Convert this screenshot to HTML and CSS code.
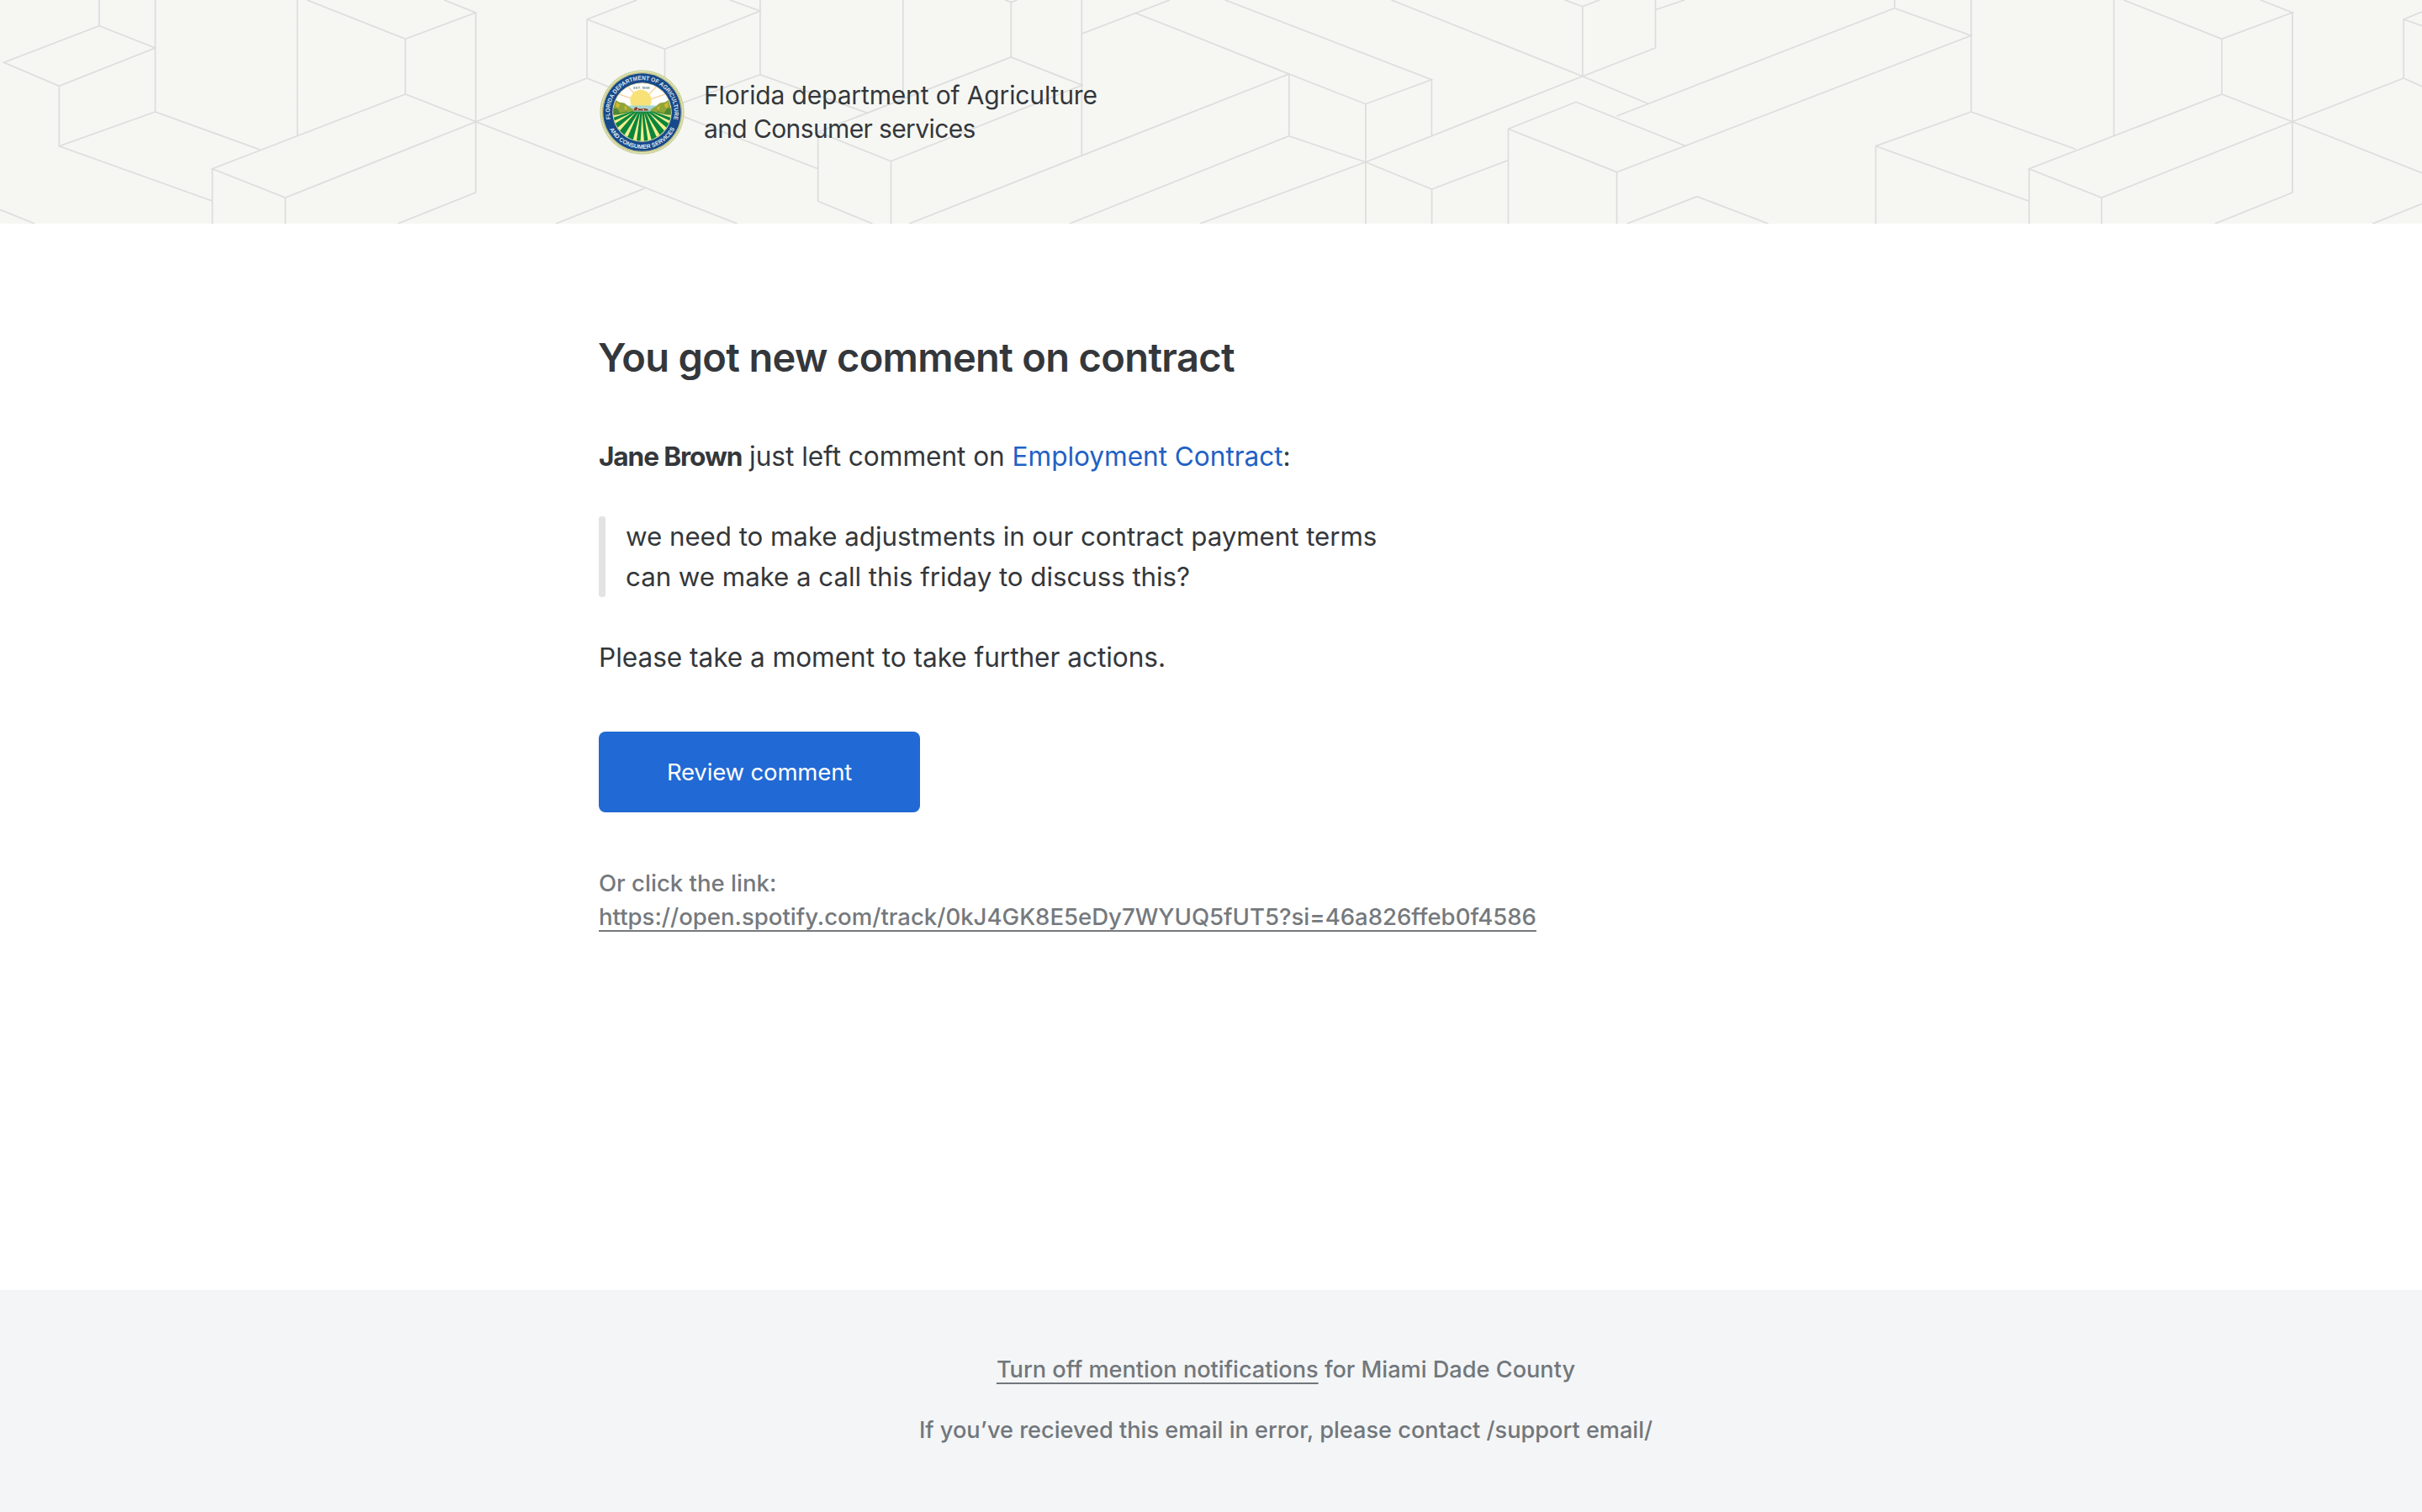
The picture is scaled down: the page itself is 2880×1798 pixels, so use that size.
FILE: index.html
```html
<!DOCTYPE html>
<html lang="en">
<head>
<meta charset="utf-8">
<title>You got new comment on contract</title>
<link rel="stylesheet" href="styles.css">
</head>
<body>
<header class="header">
  <svg class="pattern" viewBox="0 0 2880 266" aria-hidden="true">
    <path d="M118 0V30.7L184.6 57L70.3 102.3L4.6 74.3L118 30.7M184.6 0V133L70.3 173.7V102.3M70.3 173.7L252.5 239M184.6 133L308.6 177.7M353.6 0V161.3M365 0L482 46.3L565.7 15L528 0M482 46.3V112L566 144.7L339.3 235L252.5 200.7L482 112M252.5 200.7V266M339.3 235V266M565.7 15V229L473 266M0 249.3L41.3 266M566 144.7L698 93V23L757.4 0M566 144.7L876.8 266M661 266L766.6 224"/>
    <path d="M698 23L790.5 58.3L903.9 13L867.6 0M790.5 58.3V130L903.9 88.7V0M698 93L790.5 130L972.7 200.7M903.9 88.7L1030.6 134M1073.8 0V117.8M972.7 157L1202.3 68L1286.8 101.3L1059.5 191.7L972.7 157V239.3L1037.5 266M1059.5 191.7V266M1202.3 68V2.7L1195 0M1202.3 2.7L1209.5 0M1286.3 0V184M1286.8 40L1391 0"/>
    <path d="M1349.7 15.3L1400 35L1532.8 88L1623.9 123.7L1702.4 94.7L1456.7 0M1702.4 94.7V161.3M1081 266L1532.8 88V161.7L1271.7 266M1532.8 161.7L1623.9 192.7L1702.6 225V266M1623.9 123.7V266M1426.7 266L1623.9 192.7L1881.8 90.7L1968.5 57V0M1654.5 0L1881.8 90.7L1959.8 123.3M1860.5 0L1881.8 7.7L1902 0M1881.8 7.7V90.7M1969.5 11.3L2003.4 0M1702.6 225L1793 190.7M1793.5 266V153.3L1874 121.3L2004.9 173.7M1793.5 153.3L1922.5 204.7V266M1922.5 204.7L2160 113.3L2343.9 42.3L2252.8 9.7V0M1922.5 138L2120 61.3L2252.8 9.7M1934.6 266L2018 233.7L2102.8 266"/>
    <path d="M2343.9 0V133L2230.5 173.7V266M2230.5 173.7L2412.3 239M2343.9 133L2468 177.3M2513.6 0V161.3M2525.2 0L2642 46.3L2725.9 15L2688 0M2642 46.3V112L2725.9 144.7L2499 235L2412.8 200.7L2642 112M2412.8 200.7V266M2499 235V266M2725.9 15V229L2633.8 266M2725.9 144.7L2858.2 93V23L2880 14M2858.2 23L2880 30.7M2858.2 93L2880 102.7M2725.9 144.7L2880 205.7M2821.3 266L2880 242.3"/>
  </svg>
  <div class="brand">
    <svg class="seal" viewBox="0 0 100 100" role="img" aria-label="Department seal">
      <defs>
        <path id="arc-top" d="M14.3 63A38 38 0 1 1 85.7 63"/>
        <path id="arc-bottom" d="M9.600 64.700A43 43 0 0 0 90.400 64.700"/>
        <clipPath id="scene"><circle cx="50" cy="50" r="34"/></clipPath>
      </defs>
      <circle cx="50" cy="50" r="49.6" fill="#e3e4b4"/>
      <circle cx="50" cy="50" r="49" fill="none" stroke="#a9b885" stroke-width="1" stroke-dasharray="1 .8"/>
      <circle cx="50" cy="50" r="46.6" fill="none" stroke="#b9b878" stroke-width="1"/>
      <circle cx="50" cy="50" r="45.8" fill="#17498a"/>
      <circle cx="50" cy="50" r="34.9" fill="#e9e3b0"/>
      <g clip-path="url(#scene)">
        <path fill="#fff" d="M10 10h80v40H10z"/>
        <g stroke="#f8cf9a" stroke-width="1.3">
          <path d="M50 38L18 27M50 38L28 14M50 38L72 14M50 38L82 27"/>
        </g>
        <circle cx="48.500" cy="36" r="12.500" fill="#f8e277"/>
        <path fill="#a6d6d2" d="M32 42h34v7H32z"/>
        <path fill="#8fa53a" d="M12 34l6 1 5 3 6 1 5 4 6 4v6H12zM88 34l-6 1-5 3-6 1-5 4-6 4v6h28z"/>
        <path fill="#d8b62f" d="M20 38l4 3-2 4-3-2zM29 42l4 3-3 3zM80 38l-4 3 2 4 3-2zM71 42l-4 3 3 3z"/>
        <path fill="#4e8735" d="M14 44l7 2 3 5 8-2 3 4H14zM86 44l-7 2-3 5-8-2-3 4h21z"/>
        <path fill="#0b853d" d="M10 56L38 49H62L90 56V90H10z"/>
        <g fill="#f4ee8e">
          <path d="M36 49.5L13 55v2.500zM40 49.500L15 61l2 3zM43 49.500L20 69l3.500 3zM46 49.500L29 77l4 2zM48 49.500L39 84h4.500zM50 49.500L48 86h4.500zM52 49.500L57 84h4.500zM54 49.500L67 79l4-2zM57 49.500L76.500 72l3.500-3zM60 49.500L83 64l2-3zM64 49.500L87 57.500V55z"/>
        </g>
        <path fill="#8f3d24" d="M40 48l1-3 2-1.500 2 2 4 .5 4-.5 3 .5 2 2z"/>
        <path fill="#fff" d="M44 46.500h1.500v1H44zM51 46.500h1.500v1H51z"/>
      </g>
      <text class="seal-est" x="49.500" y="22.500" text-anchor="middle">EST. 1868</text>
      <text class="seal-text" textLength="136" lengthAdjust="spacingAndGlyphs"><textPath href="#arc-top" startOffset="5" textLength="136" lengthAdjust="spacingAndGlyphs">FLORIDA DEPARTMENT OF AGRICULTURE</textPath></text>
      <text class="seal-text" textLength="94" lengthAdjust="spacingAndGlyphs"><textPath href="#arc-bottom" startOffset="5.500" textLength="94" lengthAdjust="spacingAndGlyphs">AND CONSUMER SERVICES</textPath></text>
    </svg>
    <p class="brand-name">Florida department of Agriculture<br><span class="brand-second">and Consumer services</span></p>
  </div>
</header>
<main class="content">
  <h1 class="title">You got new comment on contract</h1>
  <p class="text"><strong class="author">Jane Brown</strong> just left comment on <a class="doc-link" href="#">Employment Contract</a>:</p>
  <blockquote class="quote">we need to make adjustments in our contract payment terms<br>can we make a call this friday to discuss this?</blockquote>
  <p class="text">Please take a moment to take further actions.</p>
  <a class="button" href="#">Review comment</a>
  <p class="fallback">Or click the link:<br><a class="underlined" href="#">https://open.spotify.com/track/0kJ4GK8E5eDy7WYUQ5fUT5?si=46a826ffeb0f4586</a></p>
</main>
<footer class="footer">
  <p><a class="underlined" href="#">Turn off mention notifications</a> for Miami Dade County</p>
  <p>If you’ve recieved this email in error, please contact /support email/</p>
</footer>
</body>
</html>
```
FILE: styles.css
```css
* {
  box-sizing: border-box;
  margin: 0;
  padding: 0;
}

body {
  display: flex;
  flex-direction: column;
  height: 1798px;
  background: #fff;
  color: #34373b;
  font-family: Inter, "Liberation Sans", sans-serif;
}

.header {
  position: relative;
  display: flex;
  align-items: center;
  height: 266px;
  padding-left: 713px;
  background: #f6f7f3;
  overflow: hidden;
}

/* Line art lies behind the brand */
.pattern {
  position: absolute;
  inset: 0;
  width: 100%;
  height: 100%;
  fill: none;
  stroke: #dcdddd;
  stroke-width: 1.7;
}

.brand {
  position: relative;
  display: flex;
  align-items: center;
  gap: 23px;
}

.seal {
  width: 101px;
  height: 101px;
}

.seal-text {
  fill: #dfe8ee;
  font-family: "Liberation Sans", sans-serif;
  font-size: 7px;
  font-weight: 700;
}

.seal-est {
  fill: #5b8a86;
  font-size: 4px;
  font-weight: 600;
}

.brand-name {
  padding-bottom: 1px;
  font-size: 30px;
  line-height: 40px;
  letter-spacing: -0.14px;
}

.brand-second {
  letter-spacing: -0.62px;
}

.content {
  flex: 1;
  padding: 129px 0 0 711px;
}

.title {
  margin-bottom: 64px;
  font-size: 47px;
  font-weight: 600;
  line-height: 60px;
  letter-spacing: -0.65px;
}

.text {
  padding-left: 1px;
  font-size: 31.6px;
  line-height: 48px;
  letter-spacing: -0.04px;
}

.author {
  font-weight: 700;
  letter-spacing: -1.1px;
}

.doc-link {
  color: #2161c4;
  text-decoration: none;
}

.quote {
  position: relative;
  margin: 47px 0 48px 1px;
  padding-left: 32px;
  font-size: 31.3px;
  line-height: 48px;
  letter-spacing: -0.05px;
}

.quote::before {
  content: "";
  position: absolute;
  inset: 0 auto 0 0;
  width: 8px;
  border-radius: 3px;
  background: #e3e3e3;
}

.button {
  display: flex;
  align-items: center;
  justify-content: center;
  width: 382px;
  height: 96px;
  margin: 64px 0 0 1px;
  border-radius: 8px;
  background: #2169d4;
  color: #fff;
  font-size: 27.5px;
  letter-spacing: -0.15px;
  text-decoration: none;
}

.fallback {
  margin: 64px 0 0 1px;
  color: #75797d;
  font-size: 27.55px;
  font-weight: 500;
  line-height: 40px;
}

.underlined {
  color: inherit;
  text-decoration: underline;
  text-decoration-thickness: 2px;
  text-underline-offset: 6px;
  text-decoration-skip-ink: none;
}

.footer {
  display: flex;
  flex-direction: column;
  align-items: center;
  gap: 32px;
  height: 264px;
  padding: 75px 0 0 178px;
  background: #f4f5f6;
  color: #71777c;
  font-size: 27.15px;
  font-weight: 500;
  line-height: 40px;
}
```
